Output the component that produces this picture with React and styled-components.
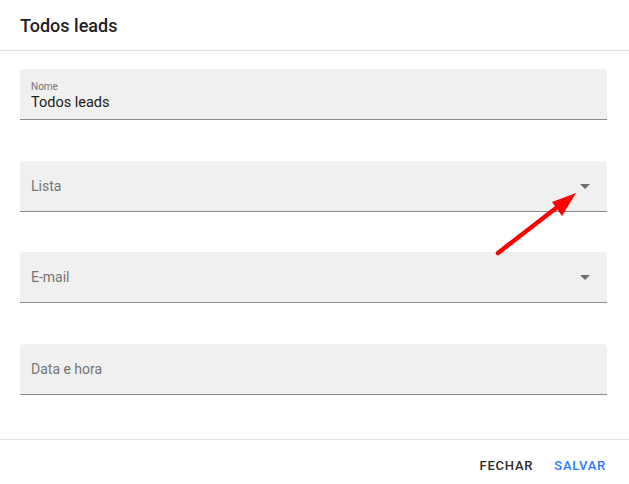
import React from 'react';
import styled, { createGlobalStyle } from 'styled-components';

const GlobalStyle = createGlobalStyle`
  html, body {
    margin: 0;
    background: #fff;
    overflow: hidden;
    font-family: Roboto, "Liberation Sans", Arial, sans-serif;
  }
`;

const Dialog = styled.div`
  position: relative;
  width: 629px;
  background: #fff;
  display: flex;
  flex-direction: column;
`;

const Header = styled.div`
  height: 50px;
  flex-shrink: 0;
  padding: 0 20px;
  display: flex;
  align-items: center;
  border-bottom: 1px solid #e0e0e0;
  font-size: 18px;
  font-weight: 500;
  color: #212121;
`;

const Content = styled.div`
  padding: 18px 22px 0 20px;
  display: flex;
  flex-direction: column;
  gap: 40.6px;
  height: 389px;
  flex-shrink: 0;
  box-sizing: border-box;
  border-bottom: 1px solid #e0e0e0;
`;

const Field = styled.div`
  height: 50px;
  flex-shrink: 0;
  background: #f0f0f0;
  border-radius: 4px 4px 0 0;
  border-bottom: 1px solid #8c8c8c;
  padding: 0 11px;
  display: flex;
  align-items: center;
  justify-content: space-between;
  color: #757575;
  font-size: 14px;
`;

const Filled = styled.div`
  display: flex;
  flex-direction: column;
  gap: 2px;
  margin-top: 3px;
`;

const SmallLabel = styled.span`
  font-size: 10px;
  color: #757575;
`;

const Value = styled.span`
  font-size: 14.5px;
  color: #212121;
`;

const Footer = styled.div`
  height: 50px;
  flex-shrink: 0;
  display: flex;
  align-items: center;
  justify-content: flex-end;
  gap: 5px;
  padding-right: 15px;
`;

const Button = styled.button`
  border: none;
  background: none;
  font-family: inherit;
  font-size: 13px;
  font-weight: 500;
  letter-spacing: 0.06em;
  padding: 6px 8px;
  color: ${p => (p.primary ? '#2979ff' : '#2b2b2b')};
  cursor: pointer;
`;

const Arrow = styled.svg`
  position: absolute;
  left: 0;
  top: 0;
  pointer-events: none;
`;

const DropIcon = () => (
  <svg width="24" height="24" viewBox="0 0 24 24" style={{ marginRight: -1 }}>
    <path d="M7 10l5 5 5-5z" fill="rgba(0,0,0,0.54)" />
  </svg>
);

export default function App() {
  return (
    <>
      <GlobalStyle />
      <Dialog>
        <Header>Todos leads</Header>
        <Content>
          <Field>
            <Filled>
              <SmallLabel>Nome</SmallLabel>
              <Value>Todos leads</Value>
            </Filled>
          </Field>
          <Field>
            Lista
            <DropIcon />
          </Field>
          <Field>
            E-mail
            <DropIcon />
          </Field>
          <Field>Data e hora</Field>
        </Content>
        <Footer>
          <Button>FECHAR</Button>
          <Button primary>SALVAR</Button>
        </Footer>
        <Arrow width="629" height="484">
          <line x1="498" y1="253" x2="560" y2="205" stroke="#ff0000" strokeWidth="4.5" strokeLinecap="round" />
          <polygon points="576,193 552,202 562,216" fill="#ff0000" />
        </Arrow>
      </Dialog>
    </>
  );
}
